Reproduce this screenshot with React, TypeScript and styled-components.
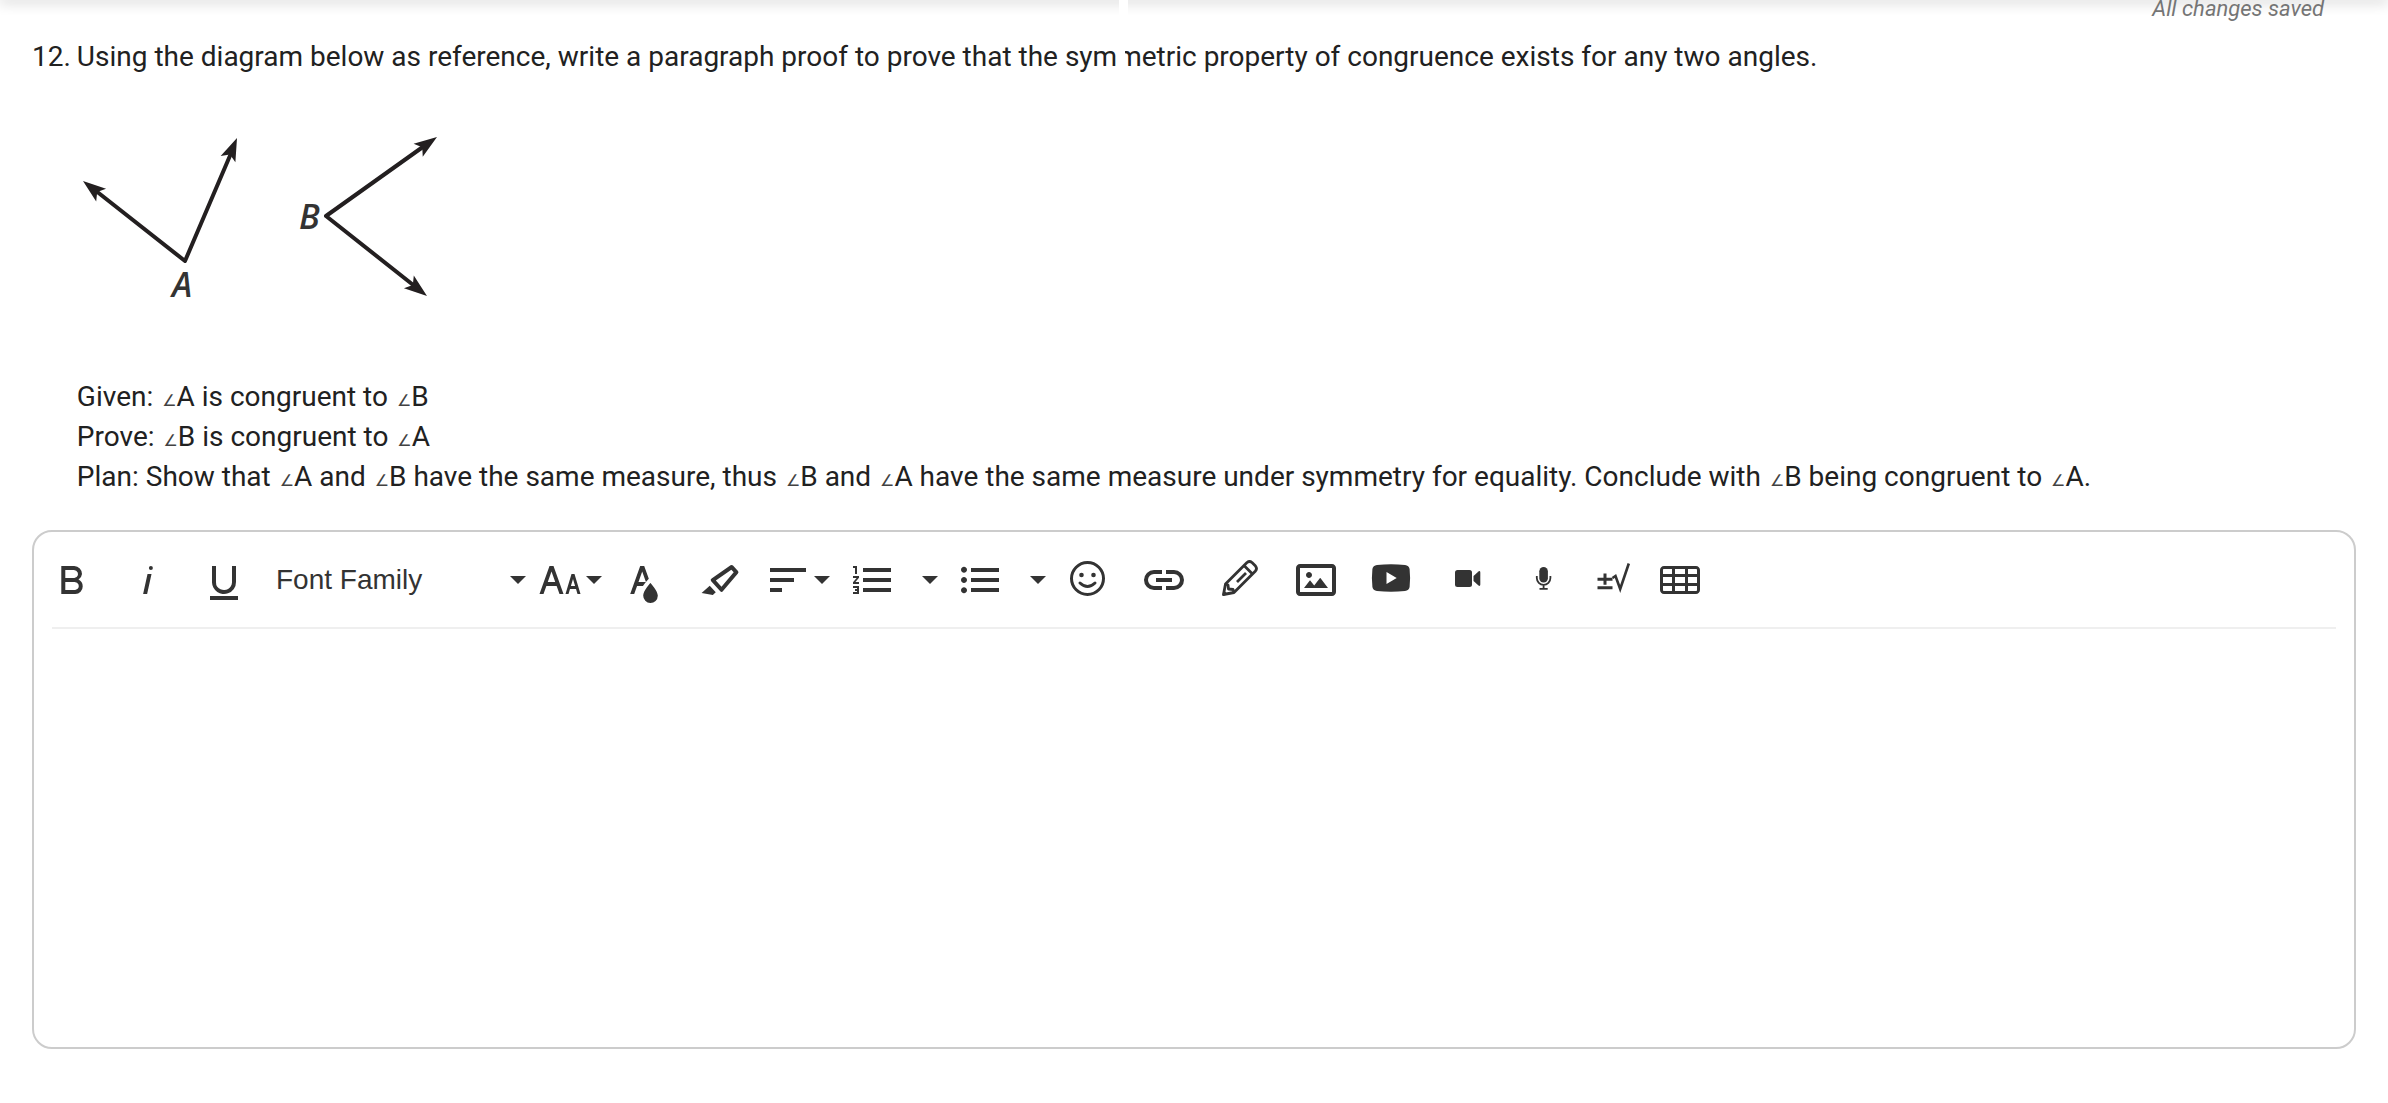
import React from "react";
import styled, { createGlobalStyle } from "styled-components";

const GlobalStyle = createGlobalStyle`
  *, *::before, *::after { box-sizing: border-box; }
  body {
    margin: 0;
    background: #fff;
    color: #212121;
    font: 28px/40px Roboto, "Liberation Sans", sans-serif;
  }
`;

const Page = styled.main`
  display: flex;
  flex-direction: column;
  min-height: 100vh;
  padding: 0 32px 54px;
`;

const HeaderShadow = styled.div`
  height: 2px;
  margin: 0 -32px;
  margin-top: -2px;
  box-shadow: 0 0 14px 1px rgba(0, 0, 0, 0.32);
`;

const SaveStatus = styled.p`
  margin: -6px 32px 0 0;
  height: 43px;
  line-height: 30px;
  font-size: 22px;
  font-style: italic;
  text-align: right;
  color: #757575;
`;

const Questions = styled.ol`
  margin: 0;
  padding: 0;
  list-style: none;
`;

const Question = styled.li`
  display: flex;
  gap: 6px;
`;

const QuestionBody = styled.div`
  flex: 1;
`;

const Line = styled.p`
  margin: 0;
`;

const Hidden = styled.span`
  position: relative;
  &::before {
    content: "";
    position: absolute;
    left: 0;
    top: 0;
    width: 8px;
    height: 32px;
    background: #fff;
  }
`;

const ShadowGap = styled.span`
  position: absolute;
  left: 1119px;
  top: 0;
  width: 9px;
  height: 16px;
  background: #fff;
`;

const Figure = styled.svg`
  display: block;
  width: 380px;
  height: 300px;
`;

const AngleSign = styled.span`
  margin-left: 2px;
  font-family: "DejaVu Sans", sans-serif;
  font-size: 16px;
  line-height: 1;
  color: #424242;
`;

const Editor = styled.section`
  display: flex;
  flex: 1;
  flex-direction: column;
  margin-top: 33px;
  border: 2px solid #ccc;
  border-radius: 20px;
`;

const Toolbar = styled.div`
  display: flex;
  height: 95px;
`;

const Divider = styled.hr`
  width: auto;
  height: 2px;
  margin: 0 18px;
  border: 0;
  background: #efefef;
`;

const Tool = styled.button<{ $width?: number; $gap?: number; $menu?: boolean }>`
  display: flex;
  flex: none;
  align-items: center;
  justify-content: ${(p) => (p.$menu ? "space-between" : "center")};
  width: ${(p) => p.$width ?? 76}px;
  margin: 0 ${(p) => p.$gap ?? 0}px 0 0;
  padding: 0 ${(p) => (p.$menu ? 4 : 0)}px 0 ${(p) => (p.$menu ? 6 : 0)}px;
  border: 0;
  background: none;
  color: #333;
  font: 28px/40px "Liberation Sans", Arial, sans-serif;
  cursor: pointer;
`;

const FontLabel = styled.span`
  padding-left: 8px;
`;

const Glyph = styled.svg`
  display: block;
  flex: none;
  width: 48px;
  height: 48px;
  fill: currentColor;
`;

const Caret = styled.span`
  width: 16px;
  border: 8px solid transparent;
  border-top-color: currentColor;
  border-bottom: 0;
`;

const Answer = styled.textarea`
  flex: 1;
  margin: 0 18px 18px;
  padding: 16px 0;
  border: 0;
  outline: 0;
  resize: none;
  background: none;
  font: inherit;
`;

const paths = {
  bold: "M15.25,11.8h0A3.68,3.68,0,0,0,17,9a3.93,3.93,0,0,0-3.86-4H6.65V19h7a3.74,3.74,0,0,0,3.7-3.78V15.1A3.64,3.64,0,0,0,15.25,11.8ZM8.65,7h4.2a2.09,2.09,0,0,1,2,1.3,2.09,2.09,0,0,1-1.37,2.61,2.23,2.23,0,0,1-.63.09H8.65Zm4.6,10H8.65V13h4.6a2.09,2.09,0,0,1,2,1.3,2.09,2.09,0,0,1-1.37,2.61A2.23,2.23,0,0,1,13.25,17Z",
  italic: "M11.76,9h2l-2.2,10h-2Zm1.68-4a1,1,0,1,0,1,1,1,1,0,0,0-1-1Z",
  underline:
    "M19,20v2H5V20Zm-3-6.785a4,4,0,0,1-5.74,3.4A3.75,3.75,0,0,1,8,13.085V5.005H6v8.21a6,6,0,0,0,8,5.44,5.851,5.851,0,0,0,4-5.65v-8H16Z",
  size: "M20.75,19h1.5l-3-10h-1.5l-3,10h1.5L17,16.5h3Zm-3.3-4,1.05-3.5L19.55,15Zm-5.7,4h2l-5-14h-2l-5,14h2l1.43-4h5.14ZM5.89,13,7.75,7.8,9.61,13Z",
  color:
    "M15.2,13.494s-3.6,3.9-3.6,6.3a3.65,3.65,0,0,0,7.3.1v-.1C18.9,17.394,15.2,13.494,15.2,13.494Zm-1.47-1.357.669-.724L12.1,5h-2l-5,14h2l1.43-4h2.943A24.426,24.426,0,0,1,13.726,12.137ZM11.1,7.8l1.86,5.2H9.244Z",
  highlight:
    "M9.91752,12.24082l7.74791-5.39017,1.17942,1.29591-6.094,7.20747L9.91752,12.24082M7.58741,12.652l4.53533,4.98327a.93412.93412,0,0,0,1.39531-.0909L20.96943,8.7314A.90827.90827,0,0,0,20.99075,7.533l-2.513-2.76116a.90827.90827,0,0,0-1.19509-.09132L7.809,11.27135A.93412.93412,0,0,0,7.58741,12.652ZM2.7939,18.52772,8.41126,19.5l1.47913-1.34617-3.02889-3.328Z",
  align: "M3,18h6v-2H3V18z M3,6v2h18V6H3z M3,13h12v-2H3V13z",
  ordered:
    "M2.5,16h2v.5h-1v1h1V18h-2v1h3V15h-3Zm1-7h1V5h-2V6h1Zm-1,2H4.3L2.5,13.1V14h3V13H3.7l1.8-2.1V10h-3Zm5-5V8h14V6Zm0,12h14V16H7.5Zm0-5h14V11H7.5Z",
  unordered:
    "M4,10.5c-.8,0-1.5.7-1.5,1.5s.7,1.5,1.5,1.5,1.5-.7,1.5-1.5S4.8,10.5,4,10.5Zm0-5.1c-.8,0-1.5.7-1.5,1.5S3.2,8.4,4,8.4s1.5-.7,1.5-1.5S4.8,5.4,4,5.4Zm0,10.2c-.8,0-1.5.7-1.5,1.5s.7,1.5,1.5,1.5,1.5-.7,1.5-1.5S4.8,15.6,4,15.6ZM7.5,6v2h14V6Zm0,12h14V16H7.5Zm0-5h14V11H7.5Z",
  link: "M11,17H7A5,5,0,0,1,7,7h4V9H7a3,3,0,0,0,0,6h4ZM17,7H13V9h4a3,3,0,0,1,0,6H13v2h4A5,5,0,0,0,17,7Zm-1,4H8v2h8Z",
  image:
    "M14.2,11l3.8,5H6l3-3.9l2.1,2.7L14,11H14.2z M8.5,11c0.8,0,1.5-0.7,1.5-1.5S9.3,8,8.5,8S7,8.7,7,9.5C7,10.3,7.7,11,8.5,11z M22,6v12c0,1.1-0.9,2-2,2H4c-1.1,0-2-0.9-2-2V6c0-1.1,0.9-2,2-2h16C21.1,4,22,4.9,22,6z M20,8.8V6H4v12h16V8.8z",
  table:
    "M20,5H4C2.9,5,2,5.9,2,7v2v1.5v3V15v2c0,1.1,0.9,2,2,2h16c1.1,0,2-0.9,2-2v-2v-1.5v-3V9V7C22,5.9,21.1,5,20,5z M9.5,13.5v-3h5v3H9.5z M14.5,15v2.5h-5V15H14.5z M9.5,9V6.5h5V9H9.5z M3.5,7c0-0.3,0.2-0.5,0.5-0.5h4V9H3.5V7z M3.5,10.5H8v3H3.5V10.5z M3.5,17v-2H8v2.5H4C3.7,17.5,3.5,17.3,3.5,17z M20.5,17c0,0.3-0.2,0.5-0.5,0.5h-4V15h4.5V17z M20.5,13.5H16v-3h4.5V13.5z M16,9V6.5h4c0.3,0,0.5,0.2,0.5,0.5V9H16z",
};

const Icon = ({ name }: { name: keyof typeof paths }) => (
  <Glyph viewBox="0 0 24 24" aria-hidden="true">
    <path d={paths[name]} />
  </Glyph>
);

const Smile = () => (
  <Glyph viewBox="0 0 48 48" aria-hidden="true">
    <circle cx="23.5" cy="22.5" r="16" fill="none" stroke="currentColor" strokeWidth="3" />
    <circle cx="17.5" cy="19" r="2.3" />
    <circle cx="29.5" cy="19" r="2.3" />
    <path d="M16 27Q23.500 34 31 27" fill="none" stroke="currentColor" strokeWidth="3" strokeLinecap="round" />
  </Glyph>
);

const Pencil = () => (
  <Glyph viewBox="0 0 48 48" aria-hidden="true">
    <g fill="none" stroke="currentColor" strokeWidth="2.8" strokeLinejoin="round">
      <path d="M7.500 38.500L9.500 28L31 6.500Q33.500 4.500 36 6.500L39.500 10Q41.500 12.500 39.500 15L18 36.500Z" />
      <path d="M28 9.500L36.500 18M9.500 28L12 29L12.500 33L17 33.500L18 36.500M21 26L30 17" />
    </g>
    <path d="M6.300 39.700L7.500 34L12 38.500Z" />
  </Glyph>
);

const Youtube = () => (
  <Glyph viewBox="0 0 48 48" aria-hidden="true">
    <path
      fillRule="evenodd"
      d="M9 9Q23 7.600 37 9Q41 9.500 41.600 13Q42.600 22 41.600 31Q41 34.500 37 35Q23 36.400 9 35Q5 34.500 4.400 31Q3.400 22 4.400 13Q5 9.500 9 9ZM18.500 16V28L28.700 22Z"
    />
  </Glyph>
);

const Video = () => (
  <Glyph viewBox="0 0 48 48" aria-hidden="true">
    <rect x="11" y="14" width="17" height="17" rx="2.500" />
    <path d="M29.500 20L34.500 15.400Q36.300 14.500 36.300 16.500V28.500Q36.300 30.500 34.500 29.600L29.500 25Z" />
  </Glyph>
);

const Microphone = () => (
  <Glyph viewBox="0 0 48 48" aria-hidden="true">
    <rect x="19.300" y="11" width="8.600" height="15.500" rx="4.300" />
    <path
      d="M16.800 20V22A6.800 6.800 0 0 0 30.400 22V20M23.600 29V32.600M19.500 32.800H27.700"
      fill="none"
      stroke="currentColor"
      strokeWidth="1.800"
    />
  </Glyph>
);

const Formula = () => (
  <Glyph viewBox="0 0 48 48" aria-hidden="true">
    <g fill="none" stroke="currentColor" strokeWidth="3">
      <path d="M9.500 23.200H24.500M17 17.500V28.800M9.500 31.700H24.500" />
      <path d="M24.500 22L27.500 20L32.200 33L40.800 7.500" strokeWidth="2.600" />
    </g>
  </Glyph>
);

const Angle = () => <AngleSign>∠</AngleSign>;

const arrow = (x: number, y: number, deg: number) => (
  <path d="M0 0L-23 -8L-18 0L-23 8Z" transform={`translate(${x} ${y}) rotate(${deg})`} />
);

export default function App() {
  return (
    <>
      <GlobalStyle />
      <Page>
        <HeaderShadow />
        <ShadowGap />
        <SaveStatus>All changes saved</SaveStatus>
        <Questions>
          <Question>
            <span>12.</span>
            <QuestionBody>
              <Line>
                Using the diagram below as reference, write a paragraph proof to prove that the sym
                <Hidden>m</Hidden>etric property of congruence exists for any two angles.
              </Line>
              <Figure viewBox="78 77 380 300" role="img" aria-label="Angle A and angle B">
                <g fill="none" stroke="#231f20" strokeWidth="4" strokeLinejoin="round">
                  <path d="M92 187L186 261L233 151" />
                  <path d="M428 144L327 216L418 288" />
                </g>
                <g fill="#231f20">
                  {arrow(84, 181, 218)}
                  {arrow(238, 138, -67)}
                  {arrow(438, 137, -35)}
                  {arrow(428, 296, 38)}
                </g>
                <g fill="#333" fontFamily="Open Sans, sans-serif" fontSize="34" fontStyle="italic" fontWeight="600">
                  <text x="173" y="297">A</text>
                  <text x="300" y="229">B</text>
                </g>
              </Figure>
              <Line>Given: <Angle />A is congruent to <Angle />B</Line>
              <Line>Prove: <Angle />B is congruent to <Angle />A</Line>
              <Line>
                Plan: Show that <Angle />A and <Angle />B have the same measure, thus <Angle />B and <Angle />A have
                the same measure under symmetry for equality. Conclude with <Angle />B being congruent to <Angle />A.
              </Line>
            </QuestionBody>
          </Question>
        </Questions>
        <Editor>
          <Toolbar role="toolbar" aria-label="Formatting">
            <Tool aria-label="Bold"><Icon name="bold" /></Tool>
            <Tool aria-label="Italic"><Icon name="italic" /></Tool>
            <Tool aria-label="Underline"><Icon name="underline" /></Tool>
            <Tool $menu $width={268}><FontLabel>Font Family</FontLabel><Caret /></Tool>
            <Tool $menu aria-label="Font size"><Icon name="size" /><Caret /></Tool>
            <Tool aria-label="Text color"><Icon name="color" /></Tool>
            <Tool aria-label="Highlight color"><Icon name="highlight" /></Tool>
            <Tool $menu $gap={8} aria-label="Align"><Icon name="align" /><Caret /></Tool>
            <Tool $menu aria-label="Ordered list"><Icon name="ordered" /></Tool>
            <Tool $width={24} $gap={8} aria-label="Ordered list styles"><Caret /></Tool>
            <Tool $menu aria-label="Unordered list"><Icon name="unordered" /></Tool>
            <Tool $width={24} aria-label="Unordered list styles"><Caret /></Tool>
            <Tool aria-label="Emoticons"><Smile /></Tool>
            <Tool aria-label="Insert link"><Icon name="link" /></Tool>
            <Tool aria-label="Draw"><Pencil /></Tool>
            <Tool aria-label="Insert image"><Icon name="image" /></Tool>
            <Tool aria-label="Insert YouTube video"><Youtube /></Tool>
            <Tool aria-label="Record video"><Video /></Tool>
            <Tool aria-label="Record audio"><Microphone /></Tool>
            <Tool $width={60} aria-label="Insert formula"><Formula /></Tool>
            <Tool aria-label="Insert table"><Icon name="table" /></Tool>
          </Toolbar>
          <Divider />
          <Answer aria-label="Answer" />
        </Editor>
      </Page>
    </>
  );
}
